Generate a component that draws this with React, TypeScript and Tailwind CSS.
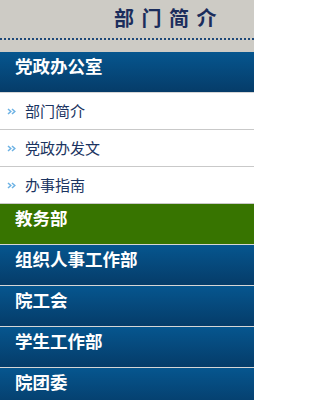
import React from 'react';

const subItems = ['部门简介', '党政办发文', '办事指南'];
const bottomBars = ['组织人事工作部', '院工会', '学生工作部', '院团委'];

const font = { fontFamily: '"Noto Sans CJK SC", "Liberation Sans", sans-serif' };

const Bar: React.FC<{ label: string; green?: boolean }> = ({ label, green }) => (
  <div
    className={`h-[41px] border-b border-[#d6d6d6] pl-[15px] text-[17.5px] font-bold leading-[28px] text-white ${
      green ? 'bg-[#377400]' : 'bg-gradient-to-b from-[#06568f] to-[#053c69]'
    }`}
  >
    {label}
  </div>
);

const Arrows = () => (
  <svg width="9" height="7" viewBox="0 0 9 7" className="ml-[7px] mr-[9px] shrink-0">
    <path d="M1 1 L3.8 3.5 L1 6 M5 1 L7.8 3.5 L5 6" fill="none" stroke="#6cb2e4" strokeWidth="1.5" />
  </svg>
);

const App: React.FC = () => {
  return (
    <div className="h-[400px] w-[254px] overflow-hidden bg-white" style={font}>
      <div className="h-[52px] bg-[#cdcbc5]">
        <div className="h-[38px] pl-[114px] text-[20px] font-bold leading-[36px] tracking-[7.5px] text-[#1b2d5c]">
          部门简介
        </div>
        <div className="border-b-2 border-dotted border-[#1d4878]" />
      </div>

      <Bar label="党政办公室" />

      {subItems.map((item) => (
        <div
          key={item}
          className="flex h-[37px] items-center border-b border-[#c9c9c9] bg-white"
        >
          <Arrows />
          <span className="text-[15px] text-[#1b3461]">{item}</span>
        </div>
      ))}

      <Bar label="教务部" green />

      {bottomBars.map((b) => (
        <Bar key={b} label={b} />
      ))}
    </div>
  );
};

export default App;
